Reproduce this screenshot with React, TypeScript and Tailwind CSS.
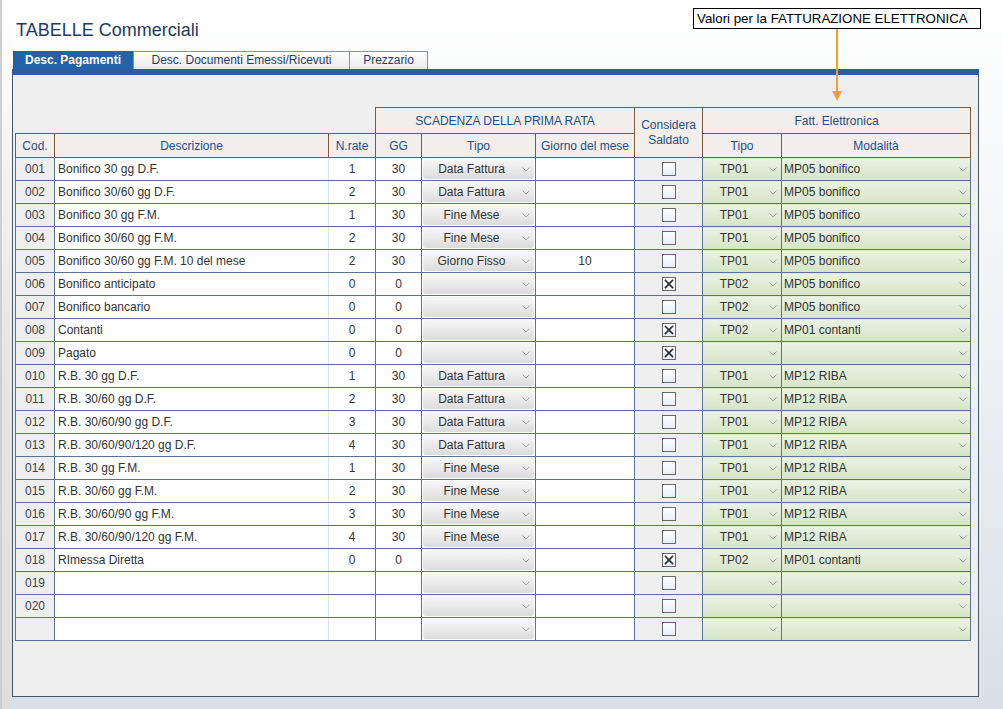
import React from "react";

type Row = {
  cod: string;
  desc: string;
  nr: string;
  gg: string;
  tipo: string;
  giorno: string;
  chk: boolean;
  tp: string;
  mod: string;
};

const R = (
  cod: string,
  desc: string,
  nr: string,
  gg: string,
  tipo: string,
  giorno: string,
  chk: boolean,
  tp: string,
  mod: string
): Row => ({ cod, desc, nr, gg, tipo, giorno, chk, tp, mod });

const rows: Row[] = [
  R("001", "Bonifico 30 gg D.F.", "1", "30", "Data Fattura", "", false, "TP01", "MP05 bonifico"),
  R("002", "Bonifico 30/60 gg D.F.", "2", "30", "Data Fattura", "", false, "TP01", "MP05 bonifico"),
  R("003", "Bonifico 30 gg F.M.", "1", "30", "Fine Mese", "", false, "TP01", "MP05 bonifico"),
  R("004", "Bonifico 30/60 gg F.M.", "2", "30", "Fine Mese", "", false, "TP01", "MP05 bonifico"),
  R("005", "Bonifico 30/60 gg F.M. 10 del mese", "2", "30", "Giorno Fisso", "10", false, "TP01", "MP05 bonifico"),
  R("006", "Bonifico anticipato", "0", "0", "", "", true, "TP02", "MP05 bonifico"),
  R("007", "Bonifico bancario", "0", "0", "", "", false, "TP02", "MP05 bonifico"),
  R("008", "Contanti", "0", "0", "", "", true, "TP02", "MP01 contanti"),
  R("009", "Pagato", "0", "0", "", "", true, "", ""),
  R("010", "R.B. 30 gg D.F.", "1", "30", "Data Fattura", "", false, "TP01", "MP12 RIBA"),
  R("011", "R.B. 30/60 gg D.F.", "2", "30", "Data Fattura", "", false, "TP01", "MP12 RIBA"),
  R("012", "R.B. 30/60/90 gg D.F.", "3", "30", "Data Fattura", "", false, "TP01", "MP12 RIBA"),
  R("013", "R.B. 30/60/90/120 gg D.F.", "4", "30", "Data Fattura", "", false, "TP01", "MP12 RIBA"),
  R("014", "R.B. 30 gg F.M.", "1", "30", "Fine Mese", "", false, "TP01", "MP12 RIBA"),
  R("015", "R.B. 30/60 gg F.M.", "2", "30", "Fine Mese", "", false, "TP01", "MP12 RIBA"),
  R("016", "R.B. 30/60/90 gg F.M.", "3", "30", "Fine Mese", "", false, "TP01", "MP12 RIBA"),
  R("017", "R.B. 30/60/90/120 gg F.M.", "4", "30", "Fine Mese", "", false, "TP01", "MP12 RIBA"),
  R("018", "RImessa Diretta", "0", "0", "", "", true, "TP02", "MP01 contanti"),
  R("019", "", "", "", "", "", false, "", ""),
  R("020", "", "", "", "", "", false, "", ""),
  R("", "", "", "", "", "", false, "", ""),
];

function Chevron() {
  return (
    <svg width="8" height="5" viewBox="0 0 8 5" className="shrink-0">
      <polyline points="0.5,0.5 4,4 7.5,0.5" fill="none" stroke="#a8a8a8" strokeWidth="1" />
    </svg>
  );
}

function Checkbox({ checked }: { checked: boolean }) {
  return (
    <svg width="14" height="14" viewBox="0 0 14 14" className="inline-block align-middle">
      <defs>
        <linearGradient id="cbg" x1="0" y1="0" x2="0" y2="1">
          <stop offset="0" stopColor="#ffffff" />
          <stop offset="1" stopColor="#e9eef4" />
        </linearGradient>
      </defs>
      <rect x="0.5" y="0.5" width="13" height="13" fill="url(#cbg)" stroke="#6a6a6a" strokeWidth="1" />
      {checked && (
        <g stroke="#2a2a2a" strokeWidth="1.6" strokeLinecap="square">
          <line x1="3.5" y1="3.5" x2="10.5" y2="10.5" />
          <line x1="10.5" y1="3.5" x2="3.5" y2="10.5" />
        </g>
      )}
    </svg>
  );
}

const hd =
  "border border-[#7d5c3c] bg-[#f1eeeb] text-[#1e4f8c] font-normal text-[12px] p-0 align-middle text-center";
const td = "border border-[#5a7293] p-0 h-[22px] text-[12px] text-[#333] align-middle";

export default function App() {
  return (
    <div className="w-[1003px] h-[709px] overflow-hidden flex bg-gradient-to-b from-white via-[#eef1f5] to-[#d9e0e9] font-['Liberation_Sans',Arial,sans-serif]">
      <div className="w-[12px] shrink-0 bg-gradient-to-b from-white via-[#e6e6e6] to-[#dedede] border-l-[2px] border-[#cfcfcf]" />
      <div className="flex-1 flex flex-col relative">
        <div className="h-[51px] pl-[4px] pt-[19px]">
          <h1 className="text-[18px] leading-[22px] text-[#1f3b5e] font-normal">TABELLE Commerciali</h1>
        </div>

        {/* callout */}
        <div className="absolute left-[681px] top-[8px] w-[288px] h-[21px] bg-white border border-black text-[13.3px] leading-[19px] text-black pl-[3px] whitespace-nowrap">
          Valori per la FATTURAZIONE ELETTRONICA
        </div>
        <svg className="absolute left-[819px] top-[29px]" width="12" height="73" viewBox="0 0 12 73">
          <line x1="6" y1="0" x2="6" y2="64" stroke="#f0a033" strokeWidth="2" />
          <polygon points="1,62 11,62 6,72" fill="#f0a033" />
        </svg>

        {/* tabs */}
        <div className="flex h-[18px] pl-[1px]">
          <div className="w-[120px] bg-[#2361a8] text-white font-bold text-[12px] leading-[18px] text-center">
            Desc. Pagamenti
          </div>
          <div className="w-[217px] border border-b-0 border-[#8093ab] bg-gradient-to-b from-white to-[#e9e9e9] text-[#1f3f6f] text-[12px] leading-[17px] text-center">
            Desc. Documenti Emessi/Ricevuti
          </div>
          <div className="w-[78px] border border-b-0 border-l-0 border-[#8093ab] bg-gradient-to-b from-white to-[#e9e9e9] text-[#1f3f6f] text-[12px] leading-[17px] text-center">
            Prezzario
          </div>
        </div>
        <div className="w-[967px] h-[6px] bg-[#2a5e9f]" />
        <div className="w-[967px] h-[622px] border-x border-b border-[#44546b] bg-[#efefef] pt-[32px] pl-[2px]">
          <table className="table-fixed border-collapse w-[955px]">
            <colgroup>
              <col className="w-[39px]" />
              <col className="w-[274px]" />
              <col className="w-[47px]" />
              <col className="w-[46px]" />
              <col className="w-[114px]" />
              <col className="w-[99px]" />
              <col className="w-[68px]" />
              <col className="w-[79px]" />
              <col className="w-[189px]" />
            </colgroup>
            <thead>
              <tr>
                <th colSpan={3} className="p-0 h-[26px]" />
                <th colSpan={3} className={hd + " h-[26px]"}>
                  SCADENZA DELLA PRIMA RATA
                </th>
                <th rowSpan={2} className={hd + " leading-[15px]"}>
                  Considera
                  <br />
                  Saldato
                </th>
                <th colSpan={2} className={hd}>
                  Fatt. Elettronica
                </th>
              </tr>
              <tr>
                <th className={hd + " h-[24px]"}>Cod.</th>
                <th className={hd}>Descrizione</th>
                <th className={hd}>N.rate</th>
                <th className={hd}>GG</th>
                <th className={hd}>Tipo</th>
                <th className={hd}>Giorno del mese</th>
                <th className={hd}>Tipo</th>
                <th className={hd}>Modalità</th>
              </tr>
            </thead>
            <tbody>
              {rows.map((r, i) => (
                <tr key={i}>
                  <td className={td + " bg-[#eeeeee] text-center text-[#444]"}>{r.cod}</td>
                  <td className={td + " bg-white pl-[3px] border-r-[#dde3ea] whitespace-nowrap overflow-hidden"}>{r.desc}</td>
                  <td className={td + " bg-white text-center"}>{r.nr}</td>
                  <td className={td + " bg-white text-center"}>{r.gg}</td>
                  <td className={td + " bg-white"}>
                    <div className="mx-[1px] h-[20px] rounded-[3px] bg-gradient-to-b from-[#f8f8f8] to-[#dcdcdc] flex items-center">
                      <span className="flex-1 text-center pl-[2px]">{r.tipo}</span>
                      <span className="w-[16px] flex justify-center">
                        <Chevron />
                      </span>
                    </div>
                  </td>
                  <td className={td + " bg-white text-center"}>{r.giorno}</td>
                  <td className={td + " bg-[#efefef] text-center leading-none"}>
                    <Checkbox checked={r.chk} />
                  </td>
                  <td className={td + " bg-gradient-to-b from-[#ebf2e4] to-[#d5e5c6]"}>
                    <div className="flex items-center h-[22px]">
                      <span className="flex-1 text-center">{r.tp}</span>
                      <span className="w-[16px] flex justify-center">
                        <Chevron />
                      </span>
                    </div>
                  </td>
                  <td className={td + " bg-gradient-to-b from-[#ebf2e4] to-[#d5e5c6]"}>
                    <div className="flex items-center h-[22px] pl-[2px]">
                      <span className="flex-1">{r.mod}</span>
                      <span className="w-[14px] flex justify-center">
                        <Chevron />
                      </span>
                    </div>
                  </td>
                </tr>
              ))}
            </tbody>
          </table>
        </div>
      </div>
    </div>
  );
}
